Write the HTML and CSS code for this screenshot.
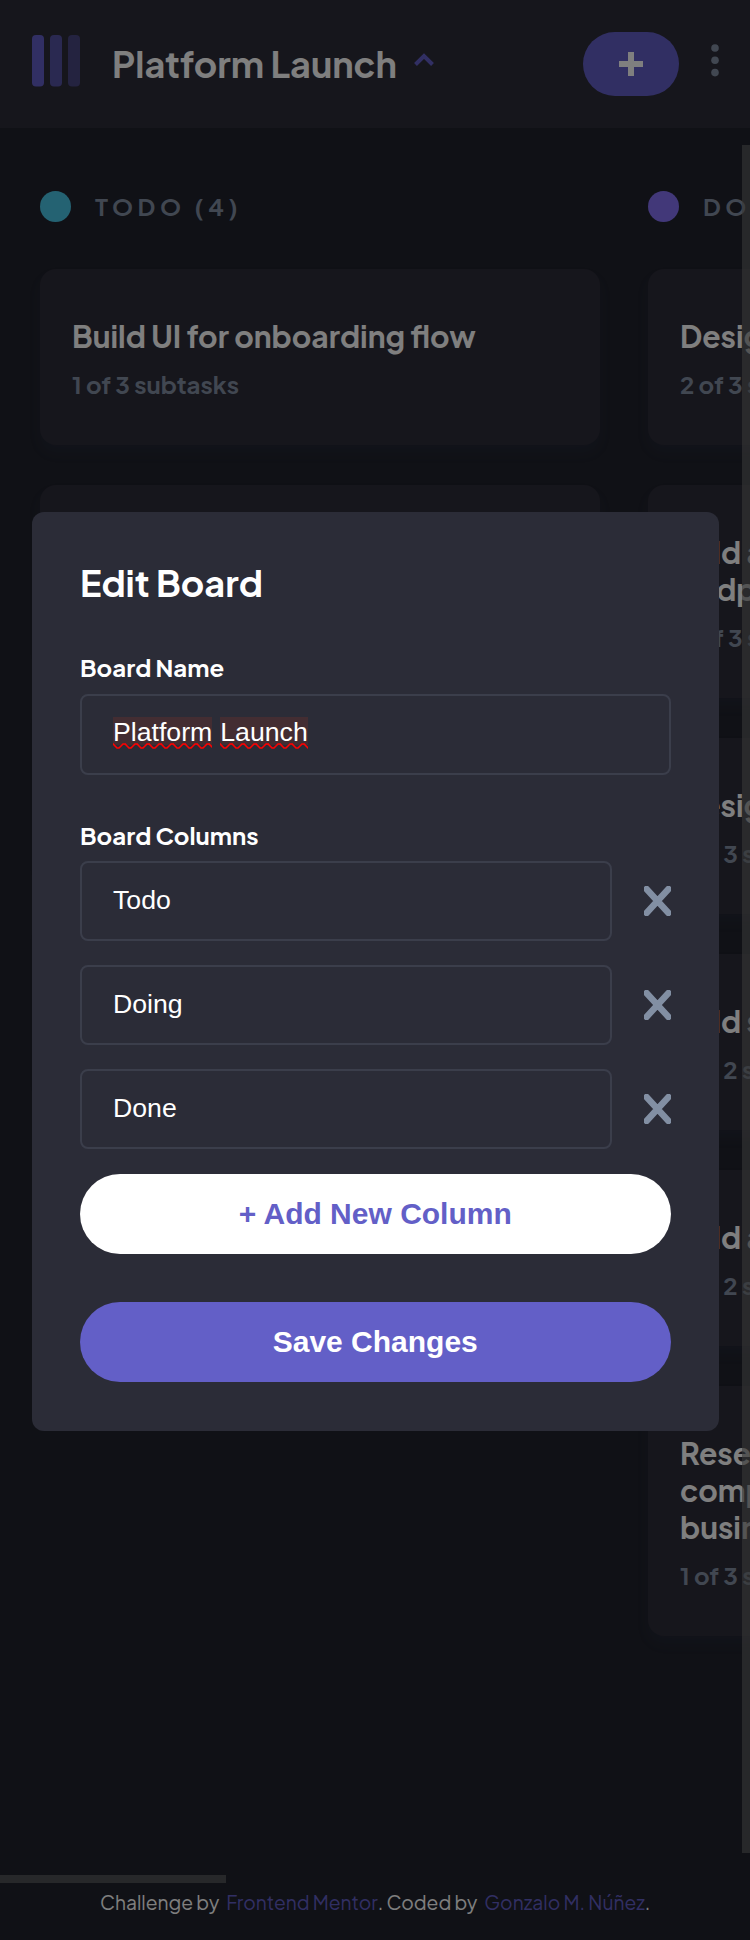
FILE: index.html
```html
<!DOCTYPE html>
<html lang="en">
<head>
<meta charset="utf-8">
<title>Kanban</title>
<link rel="stylesheet" href="styles.css">
</head>
<body>
<div class="app">
  <header class="header">
    <svg class="logo" width="48" height="52" viewBox="0 0 48 52" fill="#635fc7"><rect width="12" height="51.5" rx="4"/><rect x="18" width="12" height="51.5" rx="4" opacity=".75"/><rect x="36" width="12" height="51.5" rx="4" opacity=".5"/></svg>
    <h1 class="board-title">Platform Launch</h1>
    <svg class="chevron" width="20" height="14" viewBox="0 0 20 14" fill="none" stroke="#635fc7" stroke-width="4"><path d="M1.5 11.5 10 3l8.500 8.500"/></svg>
    <button class="new-task" aria-label="Add task"><svg width="26" height="26" viewBox="0 0 26 26" fill="#fff"><path d="M10 1h6v9h9v6h-9v9h-6v-9H1v-6h9z"/></svg></button>
    <svg class="dots" width="8" height="34" viewBox="0 0 8 34" fill="#828fa3"><circle cx="4" cy="4" r="3.800"/><circle cx="4" cy="16.300" r="3.800"/><circle cx="4" cy="28.600" r="3.800"/></svg>
  </header>
  <main class="board">
    <section class="column">
      <h2 class="column-title"><span class="dot dot-todo"></span>TODO (4)</h2>
      <article class="card"><h3>Build UI for onboarding flow</h3><p>1 of 3 subtasks</p></article>
      <article class="card"><h3>Build UI for search</h3><p>0 of 1 subtasks</p></article>
      <article class="card"><h3>Build settings UI</h3><p>0 of 2 subtasks</p></article>
      <article class="card"><h3>QA and test all major journeys</h3><p>0 of 2 subtasks</p></article>
    </section>
    <section class="column">
      <h2 class="column-title"><span class="dot dot-doing"></span>DOING (6)</h2>
      <article class="card"><h3>Design settings and search pages</h3><p>2 of 3 subtasks</p></article>
      <article class="card"><h3>Add account management<br>endpoints</h3><p>2 of 3 subtasks</p></article>
      <article class="card"><h3>Design onboarding flow</h3><p>1 of 3 subtasks</p></article>
      <article class="card"><h3>Add search endpoints</h3><p>1 of 2 subtasks</p></article>
      <article class="card"><h3>Add authentication endpoints</h3><p>1 of 2 subtasks</p></article>
      <article class="card"><h3>Research pricing points of various<br>competitors and trial different<br>business models</h3><p>1 of 3 subtasks</p></article>
    </section>
  </main>
  <footer class="footer"><span>Challenge by</span><a>Frontend Mentor</a><span>. Coded by</span><a>Gonzalo M. Núñez</a><span>.</span></footer>
  <div class="scroll-y"></div>
  <div class="scroll-x"></div>
</div>
<div class="overlay">
  <form class="modal">
    <h2 class="modal-title">Edit Board</h2>
    <div class="label">Board Name</div>
    <div class="field name-field"><span class="misspelt">Platform<svg height="6"><use href="#wave"/></svg></span> <span class="misspelt">Launch<svg height="6"><use href="#wave"/></svg></span></div>
    <div class="label columns-label">Board Columns</div>
    <div class="rows">
      <div class="row"><div class="field">Todo</div><svg class="remove" width="27" height="30" viewBox="0 0 27 30"><path d="M2.500 3 24.500 27M24.500 3 2.500 27"/></svg></div>
      <div class="row"><div class="field">Doing</div><svg class="remove" width="27" height="30" viewBox="0 0 27 30"><path d="M2.500 3 24.500 27M24.500 3 2.500 27"/></svg></div>
      <div class="row"><div class="field">Done</div><svg class="remove" width="27" height="30" viewBox="0 0 27 30"><path d="M2.500 3 24.500 27M24.500 3 2.500 27"/></svg></div>
    </div>
    <button type="button" class="btn btn-light">+ Add New Column</button>
    <button type="button" class="btn btn-primary">Save Changes</button>
  </form>
</div>
<svg class="defs" width="0" height="0"><defs><pattern id="squiggle" width="12" height="6" patternUnits="userSpaceOnUse"><path d="M-1 0 0 .8 4 5h2l4-4h2l2 2" fill="none" stroke="#f00" stroke-width="1.600"/></pattern><rect id="wave" width="99" height="6" fill="url(#squiggle)"/></defs></svg>
</body>
</html>
```
FILE: styles.css
```css
* { box-sizing: border-box; margin: 0; }
body { background: #20222c; color: #fff; font-family: "Plus Jakarta Sans", Inter, sans-serif; }
button { border: 0; padding: 0; }
.defs { position: absolute; }
.app { position: relative; width: 750px; height: 1940px; overflow: hidden; display: flex; flex-direction: column; }
.header { height: 128px; flex: none; display: flex; align-items: center; padding: 0 32px; background: #2d2c38; }
.logo { margin-top: -6px; margin-right: 32px; }
.board-title { font-size: 36px; line-height: 48px; font-weight: 700; white-space: nowrap; width: 302px; }
.chevron { margin-top: -8px; }
.new-task { display: flex; align-items: center; justify-content: center; width: 96px; height: 64px; margin-left: auto; border-radius: 32px; background: #635fc7; }
.dots { margin: -6px -1px 0 32px; }
.board { flex: 1; display: flex; gap: 48px; padding: 48px 0 0 40px; min-height: 0; }
.column { flex: none; width: 560px; display: flex; flex-direction: column; gap: 40px; }
.column-title { display: flex; align-items: center; gap: 24px; height: 60px; margin-bottom: -7px; color: #828fa3; font-size: 24px; line-height: 28px; font-weight: 700; letter-spacing: 4.6px; white-space: nowrap; }
.dot { width: 31px; height: 31px; border-radius: 50%; }
.dot-todo { background: #49c4e5; }
.dot-doing { background: #8471f2; }
.card { padding: 49px 32px 46px; border-radius: 16px; background: #2d2c38; box-shadow: 0 8px 12px rgba(54, 78, 126, .1); }
.card h3 { font-size: 30px; line-height: 37px; font-weight: 700; white-space: nowrap; }
.card p { margin-top: 14px; color: #828fa3; font-size: 24px; line-height: 30px; font-weight: 700; }
.footer { display: flex; height: 72px; flex: none; padding: 22px 0 0 100px; font-size: 19.200px; line-height: 24px; white-space: nowrap; }
.footer a { color: #635fc7; margin-left: 7px; }
.scroll-y, .scroll-x { position: absolute; background: rgba(112, 112, 112, .6); }
.scroll-y { right: 0; top: 145px; width: 8px; height: 1708px; }
.scroll-x { left: 0; top: 1875px; width: 226px; height: 8px; }
.overlay { position: absolute; top: 0; left: 0; width: 750px; height: 1940px; padding: 512px 0 0 32px; background: rgba(0, 0, 0, .5); }
.modal { display: flex; flex-direction: column; width: 686.5px; height: 918.5px; padding: 46.500px 48px 48px; border-radius: 12px; background: #2b2c37; }
.modal-title { font-size: 36px; line-height: 48px; font-weight: 700; margin-bottom: 45.500px; }
.label { font-size: 24px; line-height: 30px; font-weight: 700; margin-bottom: 12.300px; }
.columns-label { margin-bottom: 10.800px; }
.field { display: flex; align-items: center; gap: 8px; flex: 1; height: 80px; padding: 0 31px 2px; border: 2px solid #3b3e4b; border-radius: 8px; font: 26.660px/30px "Liberation Sans", Arial, sans-serif; }
.name-field { flex: none; height: 80.300px; padding-bottom: 5px; margin-bottom: 45.600px; }
.misspelt { position: relative; height: 30px; background: linear-gradient(#432d32, #432d32) 0 0 / 100% 28px no-repeat; }
.misspelt svg { position: absolute; left: 0; bottom: -2px; width: 100%; }
.rows { display: flex; flex-direction: column; gap: 24px; }
.row { display: flex; align-items: center; gap: 32px; height: 80px; }
.remove { fill: none; stroke: #828fa3; stroke-width: 6.400; stroke-linecap: round; flex: none; }
.btn { height: 80px; flex: none; border-radius: 40px; font: 700 30px/34px "Liberation Sans", Arial, sans-serif; }
.btn-light { margin-top: 25px; background: #fff; color: #635fc7; }
.btn-primary { margin-top: 48px; background: #635fc7; color: #fff; }
```
